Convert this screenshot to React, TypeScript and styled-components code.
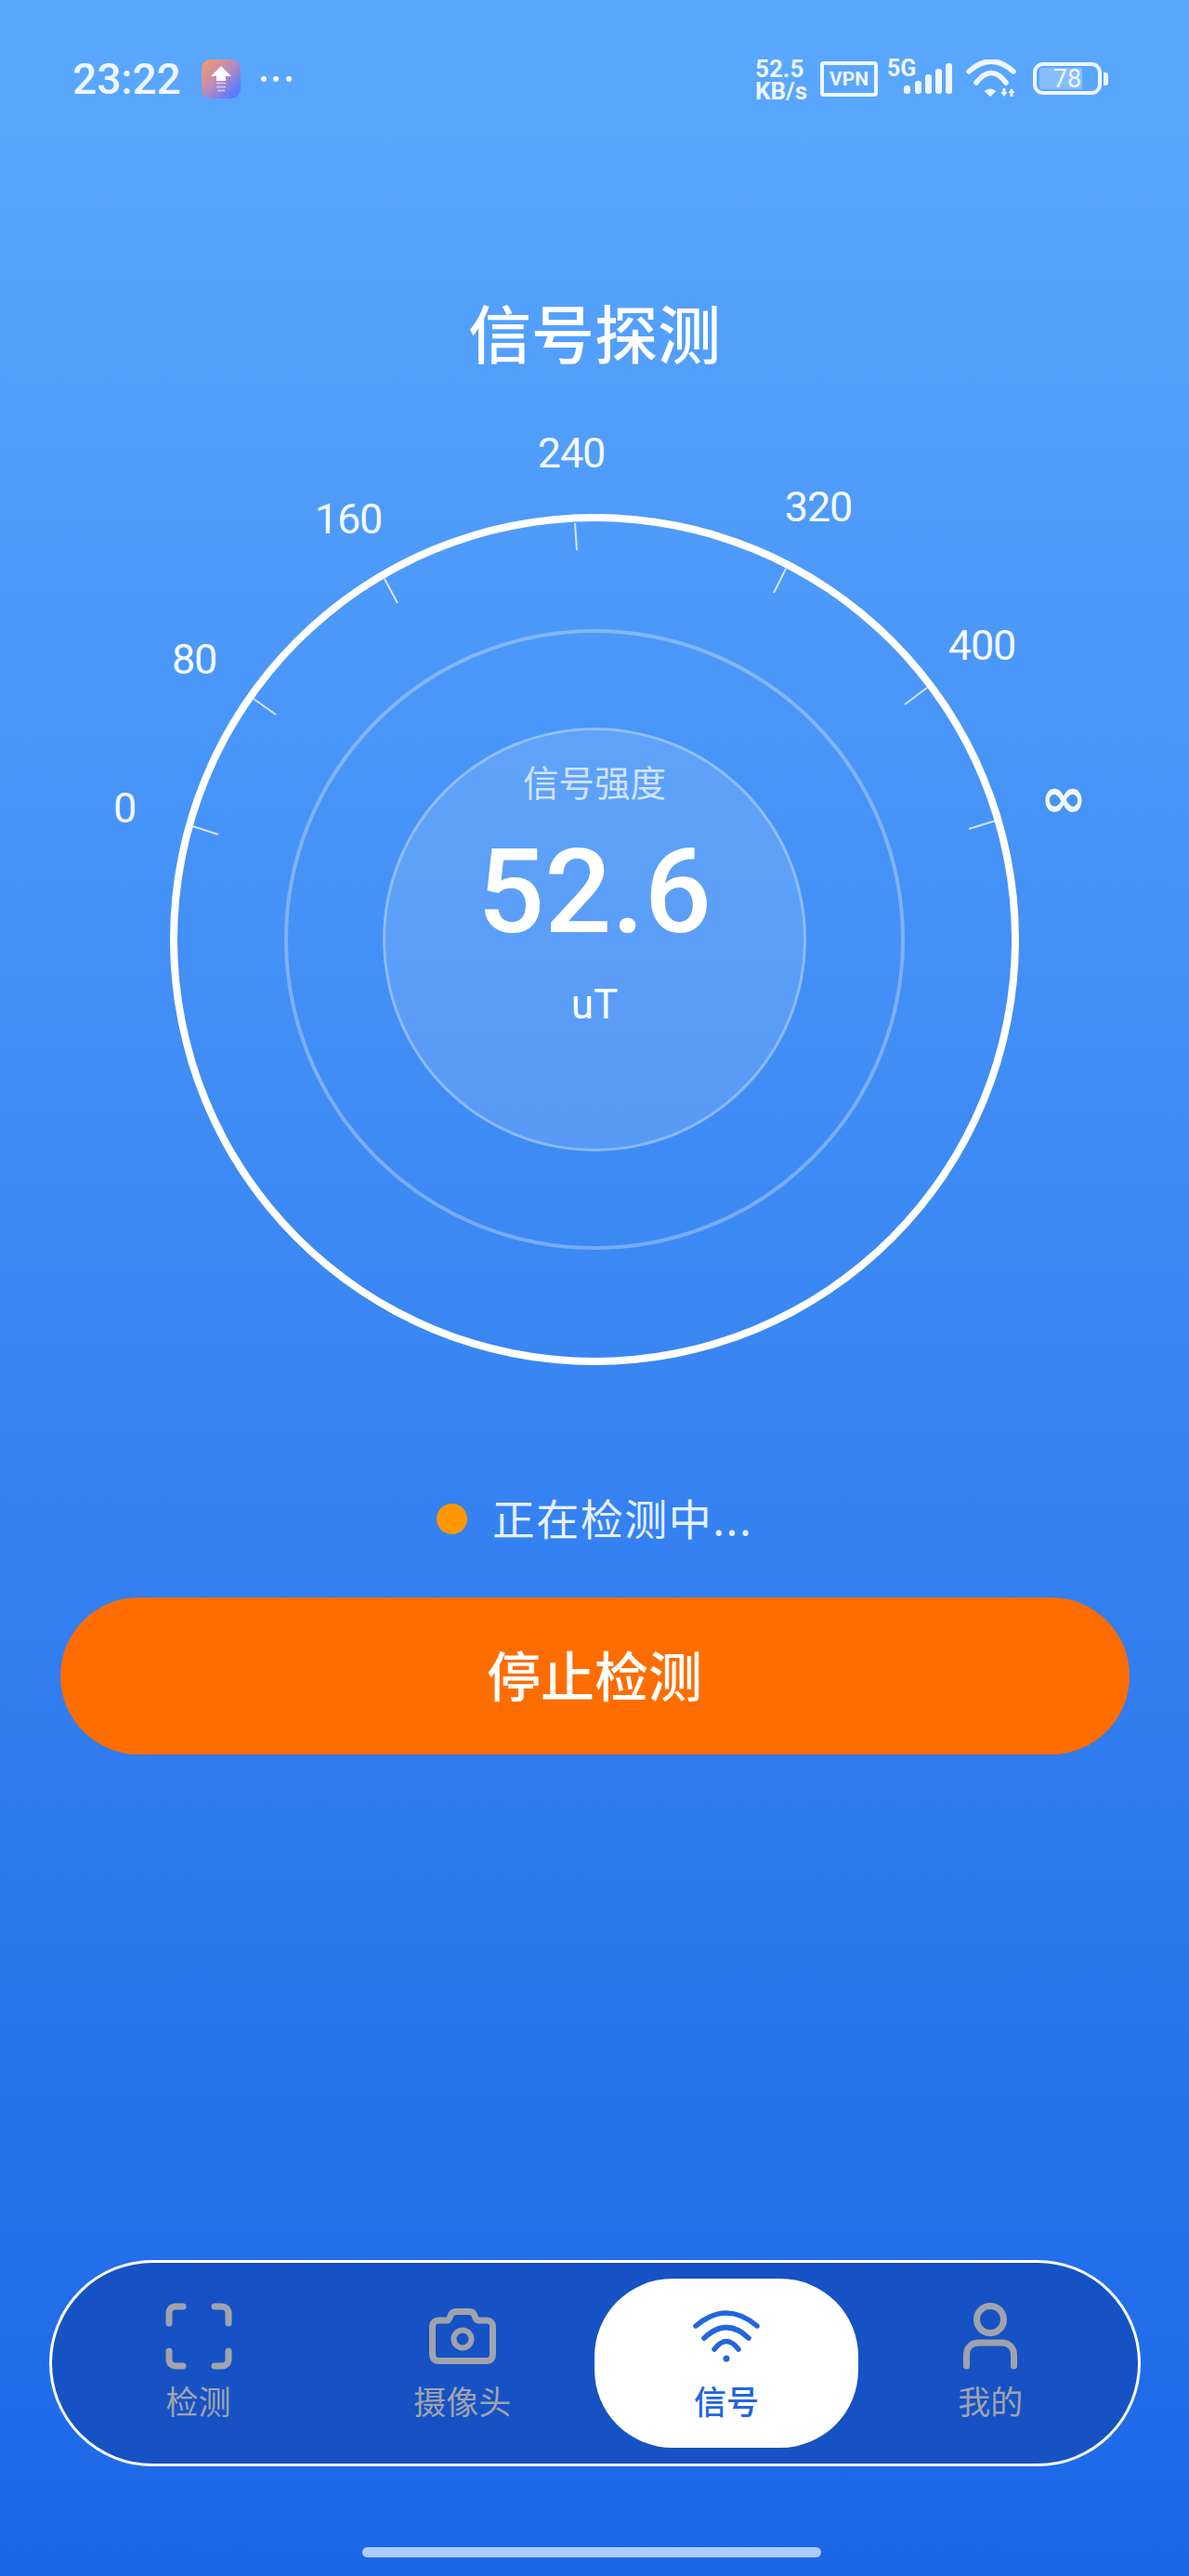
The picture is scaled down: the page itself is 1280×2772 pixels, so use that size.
import { createGlobalStyle, styled } from "styled-components";

const GlobalStyle = createGlobalStyle`
    * {
        box-sizing: border-box;
    }

    body {
        margin: 0;
        font-family: Roboto, "Noto Sans CJK SC", sans-serif;
    }
`;

const ticks = [
    [24, 336, 52, 345],
    [90, 199, 114, 216],
    [231, 70, 245, 96],
    [436, 10, 438, 39],
    [663, 59, 650, 85],
    [815, 187, 791, 205],
    [889, 330, 860, 339],
];

const scaleLabels = [
    { text: "0", x: -57, y: 309 },
    { text: "80", x: 18, y: 149 },
    { text: "160", x: 184, y: -2 },
    { text: "240", x: 424, y: -73 },
    { text: "320", x: 690, y: -15 },
    { text: "400", x: 866, y: 134 },
];

const tabs = [
    { label: "检测", icon: <ScanIcon /> },
    { label: "摄像头", icon: <CameraIcon /> },
    { label: "信号", icon: <WifiIcon />, active: true },
    { label: "我的", icon: <UserIcon /> },
];

function ScanIcon() {
    return (
        <svg width="72" height="72" viewBox="0 0 72 72" fill="none" stroke="currentColor" strokeWidth="7" strokeLinecap="round" strokeLinejoin="round">
            <path d="M4 22V11C4 7 7 4 11 4H19" />
            <path d="M53 4H61C65 4 68 7 68 11V22" />
            <path d="M68 52V61C68 65 65 68 61 68H53" />
            <path d="M19 68H11C7 68 4 65 4 61V52" />
        </svg>
    );
}

function CameraIcon() {
    return (
        <svg width="72" height="60" viewBox="0 0 72 60" fill="none" stroke="currentColor" strokeWidth="7" strokeLinejoin="round">
            <path d="M10 13H19C21 13 22 11 23 8C24 5 26 3.5 29 3.5H43C46 3.5 48 5 49 8C50 11 51 13 53 13H62C66 13 68.5 15.5 68.5 19V49C68.5 54 66 56.5 62 56.5H10C6 56.5 3.5 54 3.5 49V19C3.5 15.5 6 13 10 13Z" />
            <circle cx="36" cy="33" r="9.5" strokeWidth="6" />
        </svg>
    );
}

function WifiIcon() {
    return (
        <svg width="72" height="56" viewBox="0 0 72 56" fill="none" stroke="currentColor" strokeWidth="5.5" strokeLinecap="round">
            <path d="M3 17Q36 -11 69 17" />
            <path d="M12 30Q36 7 60 30" />
            <path d="M23 42Q36 25 49 42" />
            <circle cx="36" cy="52" r="3.5" fill="currentColor" stroke="none" />
        </svg>
    );
}

function UserIcon() {
    return (
        <svg width="58" height="72" viewBox="0 0 58 72" fill="none" stroke="currentColor" strokeWidth="7" strokeLinecap="round">
            <circle cx="29" cy="18" r="14.5" />
            <path d="M3.5 68V56C3.5 48 9 43 17 43H41C49 43 54.5 48 54.5 56V68" />
        </svg>
    );
}

function AppBadge() {
    return (
        <svg width="42" height="42" viewBox="0 0 42 42">
            <defs>
                <linearGradient id="badge" x1="0" y1="0" x2="1" y2="1">
                    <stop offset="0" stopColor="#ff9a62" />
                    <stop offset="0.5" stopColor="#b58ac0" />
                    <stop offset="0.85" stopColor="#5a7bff" />
                </linearGradient>
            </defs>
            <rect width="42" height="42" rx="10" fill="url(#badge)" />
            <path d="M21 7L32 18H26V23H16V18H10Z" fill="#fff" />
            <path d="M16 25.5H26M16 29.5H26M17 33.5H25" stroke="#fff" strokeOpacity="0.6" strokeWidth="1.7" />
        </svg>
    );
}

function SignalBars() {
    return (
        <svg width="52" height="34" viewBox="0 0 52 34" fill="#eef6ff">
            <rect x="0" y="25" width="7" height="9" rx="3" />
            <rect x="12" y="20" width="7" height="14" rx="3" />
            <rect x="23" y="13" width="7" height="21" rx="3" />
            <rect x="34" y="7" width="7" height="27" rx="3" />
            <rect x="45" y="1" width="7" height="33" rx="3" />
        </svg>
    );
}

function StatusWifi() {
    return (
        <svg width="54" height="40" viewBox="0 0 54 40" fill="none" stroke="#eef6ff" strokeWidth="5.5" strokeLinecap="round">
            <path d="M3 13Q27 -9 51 13" />
            <path d="M11 25Q27 4 43 25" />
            <path d="M19.5 34Q26 29 32.5 34L26 40Z" fill="#eef6ff" stroke="none" />
            <path d="M39.5 31H42.5V35H44.5L41 40L37.5 35H39.5Z" fill="#eef6ff" stroke="none" />
            <path d="M47.5 40H50.5V36H52.5L49 31L45.5 36H47.5Z" fill="#eef6ff" stroke="none" />
        </svg>
    );
}

export default function App() {
    return (
        <Page>
            <GlobalStyle />
            <StatusBar>
                <StatusLeft>
                    <Clock>23:22</Clock>
                    <AppBadge />
                    <MoreDots>
                        <i />
                        <i />
                        <i />
                    </MoreDots>
                </StatusLeft>
                <StatusRight>
                    <NetSpeed>
                        52.5
                        <br />
                        KB/s
                    </NetSpeed>
                    <VpnBox>VPN</VpnBox>
                    <SignalGroup>
                        <FiveG>5G</FiveG>
                        <SignalBars />
                    </SignalGroup>
                    <StatusWifi />
                    <Battery>
                        <BatteryBody>
                            <BatteryFill />
                            <BatteryText>78</BatteryText>
                        </BatteryBody>
                        <BatteryNub />
                    </Battery>
                </StatusRight>
            </StatusBar>

            <Title>信号探测</Title>

            <Gauge>
                <TickLayer viewBox="0 0 914 914">
                    {ticks.map(([x1, y1, x2, y2], i) => (
                        <line key={i} x1={x1} y1={y1} x2={x2} y2={y2} />
                    ))}
                </TickLayer>
                {scaleLabels.map((item) => (
                    <ScaleLabel key={item.text} $x={item.x} $y={item.y}>
                        {item.text}
                    </ScaleLabel>
                ))}
                <InfinityMark>∞</InfinityMark>
                <MiddleRing>
                    <InnerDisc>
                        <ReadingLabel>信号强度</ReadingLabel>
                        <ReadingValue>52.6</ReadingValue>
                        <ReadingUnit>uT</ReadingUnit>
                    </InnerDisc>
                </MiddleRing>
            </Gauge>

            <DetectStatus>
                <Dot />
                <DetectText>正在检测中...</DetectText>
            </DetectStatus>

            <StopButton>停止检测</StopButton>

            <TabBar>
                {tabs.map((tab) => (
                    <Tab key={tab.label} $active={tab.active}>
                        <TabIcon>{tab.icon}</TabIcon>
                        <TabLabel $active={tab.active}>{tab.label}</TabLabel>
                    </Tab>
                ))}
            </TabBar>
            <HomeIndicator />
        </Page>
    );
}

const Page = styled.div`
    width: 1280px;
    height: 2772px;
    overflow: hidden;
    display: flex;
    flex-direction: column;
    align-items: center;
    color: #fff;
    background: linear-gradient(180deg, #5ba8ff 0%, #1b67e8 100%);
`;

const StatusBar = styled.div`
    width: 100%;
    height: 170px;
    padding: 64px 87px 0 78px;
    display: flex;
    justify-content: space-between;
    align-items: flex-start;
`;

const StatusLeft = styled.div`
    display: flex;
    align-items: center;
    height: 42px;
    gap: 22px;
`;

const Clock = styled.span`
    font-size: 46px;
    line-height: 42px;
    font-weight: 500;
    color: #eef6ff;
`;

const MoreDots = styled.div`
    display: flex;
    gap: 7.5px;

    i {
        width: 6px;
        height: 6px;
        border-radius: 50%;
        background: #f4f9ff;
    }
`;

const StatusRight = styled.div`
    display: flex;
    align-items: flex-start;
    height: 42px;
`;

const NetSpeed = styled.div`
    width: 70px;
    margin-top: -2px;
    font-size: 26px;
    line-height: 24px;
    font-weight: 700;
    color: #eef6ff;
`;

const VpnBox = styled.div`
    width: 62px;
    height: 38px;
    margin-top: 2px;
    border: 4px solid #eef6ff;
    border-radius: 4px;
    display: flex;
    align-items: center;
    justify-content: center;
    font-size: 21px;
    font-weight: 700;
    color: #eef6ff;
`;

const SignalGroup = styled.div`
    position: relative;
    width: 70px;
    height: 38px;
    margin-left: 10px;
    margin-right: 15px;
    padding: 3px 0 0 18px;

    svg {
        display: block;
    }
`;

const FiveG = styled.span`
    position: absolute;
    left: 0;
    top: -3px;
    font-size: 25px;
    line-height: 26px;
    font-weight: 700;
    color: #eef6ff;
`;

const Battery = styled.div`
    display: flex;
    align-items: center;
    margin-left: 18px;
    margin-top: 3px;
    gap: 2px;
`;

const BatteryBody = styled.div`
    position: relative;
    width: 74px;
    height: 35px;
    border: 4px solid #eef6ff;
    border-radius: 11px;
    padding: 2px 3px;
`;

const BatteryFill = styled.div`
    width: 46px;
    height: 100%;
    border-radius: 3px 0 0 3px;
    background: rgba(255, 255, 255, 0.28);
`;

const BatteryText = styled.span`
    position: absolute;
    left: 0;
    right: 0;
    top: 0;
    bottom: 0;
    display: flex;
    align-items: center;
    justify-content: center;
    font-size: 27px;
    color: #eef6ff;
`;

const BatteryNub = styled.div`
    width: 5px;
    height: 14px;
    border-radius: 0 3px 3px 0;
    background: #eef6ff;
`;

const Title = styled.h1`
    height: 100px;
    margin: 137px 0 146px;
    font-family: "Noto Sans CJK SC", sans-serif;
    font-size: 68px;
    line-height: 100px;
    font-weight: 500;
    color: #fff;
`;

const Gauge = styled.div`
    position: relative;
    flex: none;
    width: 914px;
    height: 916px;
    border: 8px solid #fff;
    border-radius: 50%;
    display: flex;
    align-items: center;
    justify-content: center;
`;

const TickLayer = styled.svg`
    position: absolute;
    left: -8px;
    top: -8px;
    width: 914px;
    height: 914px;
    overflow: visible;

    line {
        stroke: rgba(255, 255, 255, 0.75);
        stroke-width: 2px;
    }
`;

const ScaleLabel = styled.span<{ $x: number; $y: number }>`
    position: absolute;
    left: ${(props) => props.$x}px;
    top: ${(props) => props.$y}px;
    transform: translate(-50%, -50%);
    font-size: 45px;
    line-height: 50px;
    letter-spacing: -1.2px;
    font-weight: 400;
    color: #f4f9ff;
`;

const InfinityMark = styled.span`
    position: absolute;
    left: 929px;
    top: 272px;
    font-family: "DejaVu Sans", sans-serif;
    font-size: 60px;
    line-height: 50px;
    font-weight: 700;
    color: #f4f9ff;
`;

const MiddleRing = styled.div`
    width: 668px;
    height: 668px;
    border: 4px solid rgba(255, 255, 255, 0.3);
    border-radius: 50%;
    display: flex;
    align-items: center;
    justify-content: center;
`;

const InnerDisc = styled.div`
    width: 456px;
    height: 456px;
    padding-top: 33px;
    border: 3px solid rgba(255, 255, 255, 0.3);
    border-radius: 50%;
    background: rgba(255, 255, 255, 0.13);
    display: flex;
    flex-direction: column;
    align-items: center;
`;

const ReadingLabel = styled.div`
    font-family: "Noto Sans CJK SC", sans-serif;
    font-size: 38.5px;
    line-height: 46px;
    margin-top: -2px;
    font-weight: 400;
    color: rgba(255, 255, 255, 0.72);
`;

const ReadingValue = styled.div`
    margin-top: 32px;
    font-size: 127px;
    line-height: 130px;
    font-weight: 500;
    color: #fff;
`;

const ReadingUnit = styled.div`
    margin-top: 31px;
    font-size: 44px;
    line-height: 50px;
    font-weight: 400;
    color: #fff;
`;

const DetectStatus = styled.div`
    margin-top: 133px;
    height: 64px;
    display: flex;
    align-items: center;
    gap: 27px;
    font-family: "Noto Sans CJK SC", sans-serif;
    font-size: 46px;
    color: #e6f1ff;
`;

const DetectText = styled.span`
    letter-spacing: 1.5px;
    margin-top: -5px;
`;

const Dot = styled.i`
    width: 33px;
    height: 33px;
    border-radius: 50%;
    background: #ff9800;
`;

const StopButton = styled.button`
    flex: none;
    margin-top: 53px;
    width: 1151px;
    height: 169px;
    padding: 0 0 6px;
    border: none;
    border-radius: 85px;
    background: #ff6d00;
    color: #fff;
    font-family: "Noto Sans CJK SC", sans-serif;
    font-size: 58px;
    font-weight: 500;
`;

const TabBar = styled.nav`
    margin-top: auto;
    flex: none;
    width: 1175px;
    height: 222px;
    padding: 17px 16px;
    border: 3px solid #fff;
    border-radius: 111px;
    background: #1652c4;
    display: grid;
    grid-template-columns: repeat(4, 1fr);
`;

const Tab = styled.div<{ $active?: boolean }>`
    border-radius: 84px;
    height: 182px;
    display: flex;
    flex-direction: column;
    align-items: center;
    background: ${(props) => (props.$active ? "#fff" : "transparent")};
    color: ${(props) => (props.$active ? "#2266dd" : "#a0a3ad")};
`;

const TabIcon = styled.div`
    margin-top: 26px;
    height: 72px;
    display: flex;
    align-items: center;
    justify-content: center;
`;

const TabLabel = styled.span<{ $active?: boolean }>`
    margin-top: 11px;
    font-family: "Noto Sans CJK SC", sans-serif;
    font-size: 35px;
    line-height: 44px;
    font-weight: ${(props) => (props.$active ? 500 : 400)};
`;

const HomeIndicator = styled.div`
    flex: none;
    margin: 87px 7px 20px 0;
    width: 494px;
    height: 11px;
    border-radius: 6px;
    background: #adcbfb;
`;
